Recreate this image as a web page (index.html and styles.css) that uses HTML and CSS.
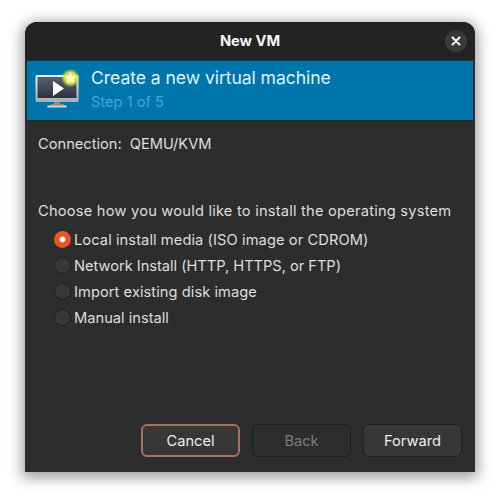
FILE: index.html
```html
<!DOCTYPE html>
<html lang="en">
<head>
<meta charset="utf-8">
<title>New VM</title>
<link rel="stylesheet" href="styles.css">
</head>
<body>
<div class="window">
  <header class="titlebar">
    <span class="title">New VM</span>
    <button class="close" aria-label="Close">
      <svg width="10" height="10" viewBox="0 0 10 10"><path d="M1.500 1.500l7 7M8.500 1.500l-7 7" stroke="#fff" stroke-width="2" stroke-linecap="round"/></svg>
    </button>
  </header>
  <section class="banner">
    <svg class="vm-icon" width="46" height="48" viewBox="0 0 46 48">
      <defs>
        <linearGradient id="bez" x1="0" y1="0" x2="0" y2="1"><stop offset="0" stop-color="#eceef0"/><stop offset="1" stop-color="#a9adb2"/></linearGradient>
        <linearGradient id="scr" x1="0" y1="0" x2="0" y2="1"><stop offset="0" stop-color="#59606c"/><stop offset="1" stop-color="#2c3240"/></linearGradient>
        <radialGradient id="glow"><stop offset="0" stop-color="#fdfb6a"/><stop offset="0.6" stop-color="#e6e83c" stop-opacity=".95"/><stop offset="1" stop-color="#b9d028" stop-opacity="0"/></radialGradient>
      </defs>
      <rect x="0.500" y="13" width="43" height="27" rx="1.500" fill="url(#bez)"/>
      <rect x="2.500" y="15" width="39" height="21" fill="url(#scr)"/>
      <path d="M14.500 43.500h15l-1-1.500h-3l-1-2h-5l-1 2h-3z" fill="#8f8f8c"/>
      <rect x="12.500" y="43.500" width="19" height="2" fill="#d5d7da"/>
      <path d="M18 19l11 7.500-11 7.500z" fill="#fff"/>
      <circle cx="35.500" cy="16" r="9.500" fill="url(#glow)"/>
      <path d="M35.500 10.500l1.700 3.600 3.900.500-2.900 2.700.8 3.900-3.500-2-3.500 2 .8-3.900-2.900-2.700 3.900-.500z" fill="#fffbd0"/>
    </svg>
    <div class="banner-text">
      <div class="banner-title">Create a new virtual machine</div>
      <div class="banner-step">Step 1 of 5</div>
    </div>
  </section>
  <main class="content">
    <div class="connection"><span>Connection:</span><span>QEMU/KVM</span></div>
    <div class="prompt">Choose how you would like to install the operating system</div>
    <div class="options">
      <label class="option"><span class="radio checked"></span><span class="opt-local">Local install media (ISO image or CDROM)</span></label>
      <label class="option"><span class="radio"></span><span class="opt-net">Network Install (HTTP, HTTPS, or FTP)</span></label>
      <label class="option"><span class="radio"></span><span class="opt-import">Import existing disk image</span></label>
      <label class="option"><span class="radio"></span><span class="opt-manual">Manual install</span></label>
    </div>
  </main>
  <footer class="actions">
    <button class="btn focus">Cancel</button>
    <button class="btn disabled">Back</button>
    <button class="btn">Forward</button>
  </footer>
</div>
</body>
</html>
```
FILE: styles.css
```css
* { box-sizing: border-box; }
html, body { margin: 0; height: 100%; }
body {
  background: #fff;
  padding: 22px 25px 28px;
  font-family: Inter, "Noto Sans", sans-serif;
  font-size: 14.67px;
  color: #dedede;
}
.window {
  width: 450px;
  height: 450px;
  background: #2d2d2d;
  border-radius: 12px 12px 0 0;
  box-shadow: 0 3px 14px 3px rgba(0,0,0,.38);
  display: flex;
  flex-direction: column;
  overflow: hidden;
}
.titlebar {
  height: 38px;
  background: #232323;
  display: flex;
  align-items: center;
  justify-content: center;
  position: relative;
  flex: none;
}
.title { font-weight: 700; font-size: 14.67px; color: #f5f5f5; }
.close {
  position: absolute;
  right: 8px;
  top: 8px;
  width: 22px;
  height: 22px;
  border: 0;
  border-radius: 50%;
  background: #3a3a3a;
  padding: 0;
  display: flex;
  align-items: center;
  justify-content: center;
}
.banner {
  margin: 0 2px;
  height: 61px;
  flex: none;
  background: #0075ab;
  border-bottom: 1px solid #0f2a3a;
  border-top: 1px solid #1a3646;
  display: flex;
  align-items: center;
  gap: 10px;
  padding-left: 8px;
  color: #dff4ff;
}
.vm-icon { flex: none; margin-top: -9px; }
.banner-title { font-size: 17.6px; line-height: 24px; margin-top: -2px; letter-spacing: -.07px; }
.banner-step { font-size: 14.67px; line-height: 22px; margin-top: 1px; color: #3fa6dd; }
.content { flex: 1; padding: 14px 13px 0; }
.connection { display: flex; gap: 8px; line-height: 18px; }
.prompt { margin-top: 49px; line-height: 18px; letter-spacing: .21px; }
.options {
  margin-top: 6px;
  padding-left: 15px;
  display: flex;
  flex-direction: column;
}
.option { display: flex; align-items: center; gap: 3px; height: 26px; }
.option > span:last-child { position: relative; top: 1px; }
.opt-local { letter-spacing: .08px; }
.opt-net { letter-spacing: -.03px; }
.opt-import { letter-spacing: .06px; }
.radio {
  width: 17px;
  height: 17px;
  margin-left: 1px;
  border-radius: 50%;
  background: #383838;
  border: 1px solid #1e1e1e;
  flex: none;
}
.radio.checked {
  border: 0;
  background: radial-gradient(circle, #fff 0 2.5px, #e95420 3.3px);
}
.actions {
  display: flex;
  justify-content: flex-end;
  gap: 12px;
  padding: 0 13px 15px;
  flex: none;
}
.btn {
  width: 99px;
  height: 33px;
  border-radius: 6px;
  border: 1px solid #1f1f1f;
  background: #373737;
  color: #eee;
  font: inherit;
  padding: 1px 0 0;
}
.btn.focus { border: 2px solid #a9705a; }
.btn.disabled { background: #2d2d2d; color: #7c7c7c; }
```
